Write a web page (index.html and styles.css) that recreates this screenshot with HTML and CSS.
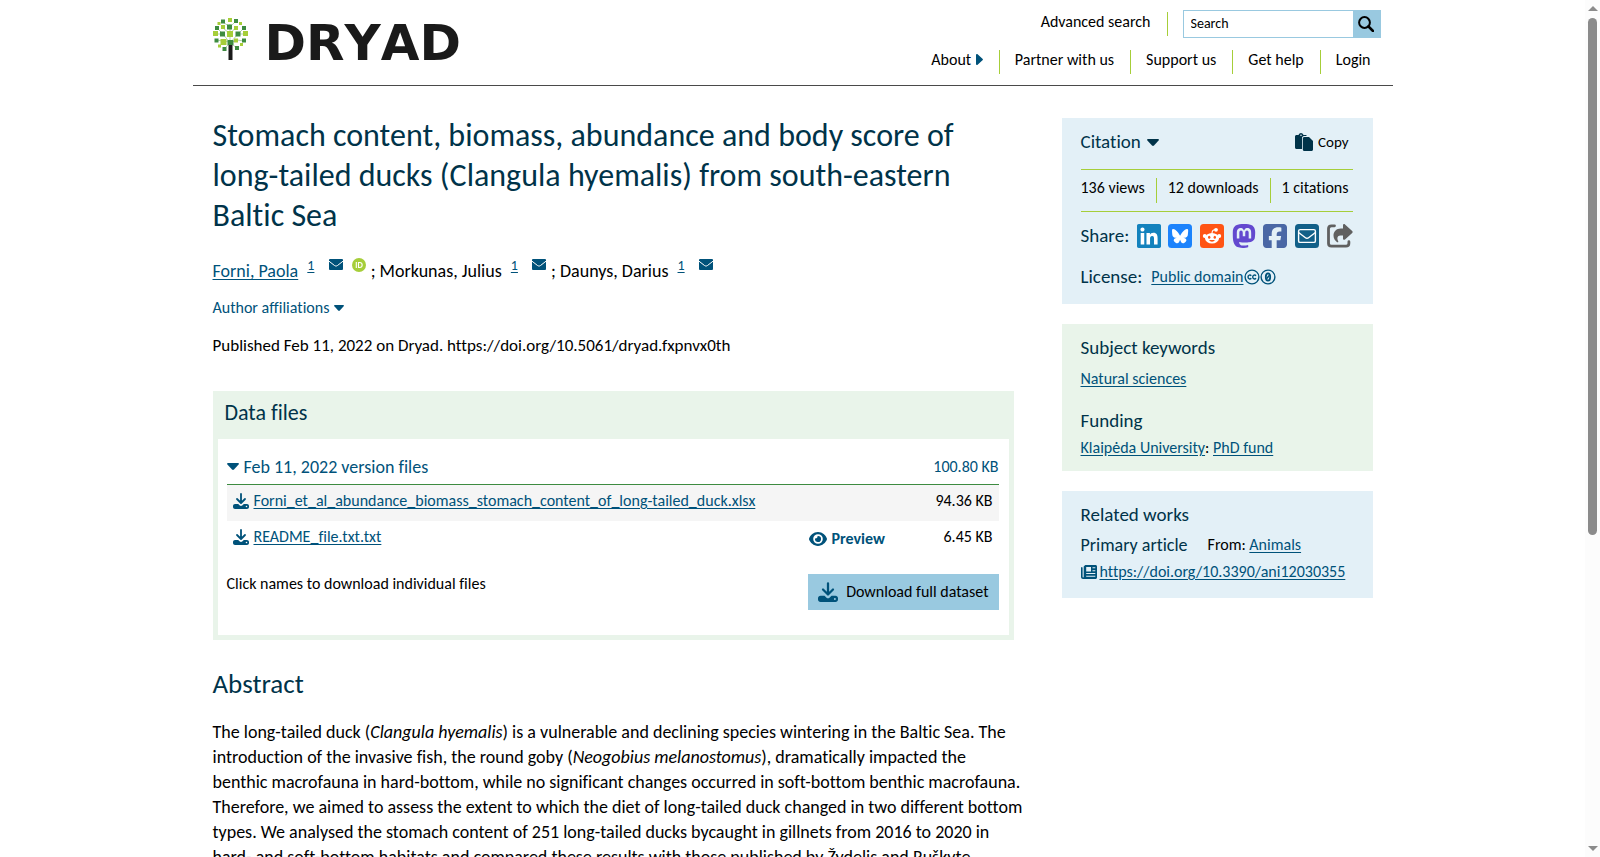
FILE: index.html
```html
<!DOCTYPE html>
<html lang="en">
<head>
<meta charset="utf-8">
<title>Dryad | Stomach content, biomass, abundance and body score of long-tailed ducks</title>
<link rel="stylesheet" href="styles.css">
</head>
<body>
<svg class="sprite" aria-hidden="true">
  <symbol id="down" viewBox="0 0 12 7"><path d="M1 0h10c1 0 1.200.8.600 1.500L7 6.500c-.6.600-1.400.600-2 0L.4 1.500C-.2.800 0 0 1 0z"/></symbol>
  <symbol id="mail" viewBox="0 0 14 11"><rect width="14" height="11" rx="1"/><path d="M0 2.200l5.500 4.300c1 .7 2 .7 3 0L14 2.200" fill="none" stroke="#fff" stroke-width="1"/></symbol>
  <symbol id="save" viewBox="0 0 16 16"><path d="M8 1v8M4 6l4 4 4-4" fill="none" stroke="currentColor" stroke-width="1.800" stroke-linecap="round" stroke-linejoin="round"/><path fill-rule="evenodd" d="M2 11h3.200l1.600 1.500c.7.600 1.700.600 2.400 0L10.800 11H14c1.100 0 2 .9 2 2v1c0 1.100-.9 2-2 2H2c-1.100 0-2-.9-2-2v-1c0-1.100.9-2 2-2zm11.500 1.700a.8.8 0 1 0 0 1.600.8.800 0 0 0 0-1.600z"/></symbol>
</svg>
<div class="window">
<div class="page">
  <header class="header">
    <a class="logo" href="#" aria-label="Dryad home">
      <svg width="35" height="42" viewBox="0 0 35 42">
        <g fill="none" stroke="#8fbf8a" stroke-width=".7"><path d="M17 25L10 16 4 10M17 25l8-9 6-6M17 25V6M10 16H3M25 16h7M17 24l-7-1-7-1M17 25l7-3 7 1M17 25l-6 6M17 25l7 5M10 10l7 6 6-7M10 4l7 5 6-6"/></g>
        <g fill="#a6ce39"><path d="M15 0h4v4h-4zM4.500 4h3v3h-3zM26 4h3v3h-3zM8 7h4v4H8zM21 8h4v4h-4zM0 13h5v5H0zM14 13h6v6h-6zM30 13h5v5h-5zM7.500 21h6v6h-6zM21 20.500h4v4h-4zM5 26.500h3v3H5zM27 25h3v3h-3z"/></g>
        <g fill="#3d8b40"><path d="M8 1.500h4v4H8zM21 1h4v4h-4zM2 8h4v4H2zM14 6.500h5v5h-5zM29 8h4v4h-4zM7 13.500h5v5H7zM22.500 13.500h5v5h-5zM1.500 20.500h4v4h-4zM29 20.500h4v4h-4zM9.500 29h4v4h-4zM22 28h4v4h-4z"/></g>
        <path fill="#1a1a1a" d="M15.500 26h4v16h-4z"/><path fill="#3d8b40" d="M14.500 22h6v5h-6z"/>
      </svg>
      <span class="wordmark">DRYAD</span>
    </a>
    <div class="menus">
      <div class="tools">
        <a class="advanced" href="#">Advanced search</a>
        <form class="search" role="search">
          <input type="text" placeholder="Search" aria-label="Search">
          <button type="button" aria-label="Submit search"><svg width="16" height="16" viewBox="0 0 16 16" fill="none" stroke="#000" stroke-width="2"><circle cx="6.500" cy="6.500" r="5.400"/><path d="M10.500 10.500L15 15" stroke-width="2.500" stroke-linecap="round"/></svg></button>
        </form>
      </div>
      <nav class="nav">
        <a href="#">About <svg class="blue" width="7" height="11" viewBox="0 0 7 11"><path d="M0 1c0-1 1-1.300 1.600-.7l4.900 4.400c.6.500.6 1.100 0 1.600l-4.900 4.400C1 11.300 0 11 0 10z"/></svg></a>
        <a href="#">Partner with us</a>
        <a href="#">Support us</a>
        <a href="#">Get help</a>
        <a href="#">Login</a>
      </nav>
    </div>
  </header>

  <div class="content">
    <main class="main">
      <h1>Stomach content, biomass, abundance and body score of long-tailed ducks (Clangula hyemalis) from south-eastern Baltic Sea</h1>
      <div class="authors">
        <span class="author"><a href="#">Forni, Paola</a> <sup><a href="#">1</a></sup> <a class="badge" href="#" aria-label="Email Paola Forni"><svg width="14" height="11"><use href="#mail"/></svg></a> <a class="badge" href="#" aria-label="ORCID"><svg width="14" height="14" viewBox="0 0 14 14"><circle cx="7" cy="7" r="7" fill="#a6ce39"/><path d="M4.300 4v6M6.500 4.500v5h1.200c3.300 0 3.300-5 0-5z" fill="none" stroke="#fff" stroke-width="1.100"/></svg></a></span>
        <span class="author">; Morkunas, Julius <sup><a href="#">1</a></sup> <a class="badge" href="#" aria-label="Email Julius Morkunas"><svg width="14" height="11"><use href="#mail"/></svg></a></span>
        <span class="author">; Daunys, Darius <sup><a href="#">1</a></sup> <a class="badge" href="#" aria-label="Email Darius Daunys"><svg width="14" height="11"><use href="#mail"/></svg></a></span>
      </div>
      <button class="affiliations" type="button">Author affiliations <svg width="10" height="6"><use href="#down"/></svg></button>
      <p class="published">Published Feb 11, 2022 on Dryad. https://doi.org/10.5061/dryad.fxpnvx0th</p>

      <section class="files">
        <h2>Data files</h2>
        <div class="files-body">
          <details open>
            <summary><svg width="12" height="7"><use href="#down"/></svg><span class="version">Feb 11, 2022 version files</span><span>100.80 KB</span></summary>
            <table>
              <colgroup><col><col class="col-preview"><col class="col-size"></colgroup>
              <tbody>
              <tr><td><a class="file" href="#"><svg width="16" height="16"><use href="#save"/></svg><span>Forni_et_al_abundance_biomass_stomach_content_of_long-tailed_duck.xlsx</span></a></td><td></td><td class="size">94.36 KB</td></tr>
              <tr><td><a class="file" href="#"><svg width="16" height="16"><use href="#save"/></svg><span>README_file.txt.txt</span></a></td><td class="preview-cell"><button class="preview" type="button"><svg width="18" height="14" viewBox="0 0 18 14"><path fill-rule="evenodd" d="M9 0c4.500 0 7.700 3.300 8.900 6.400.1.400.1.800 0 1.200C16.700 10.700 13.500 14 9 14S1.300 10.700.1 7.600a1.600 1.600 0 0 1 0-1.200C1.300 3.300 4.500 0 9 0zm0 2.200a4.800 4.800 0 1 0 0 9.600 4.800 4.800 0 0 0 0-9.600zM9 4a3 3 0 1 1-2.900 2.300A1.900 1.900 0 0 0 8.500 4z"/></svg>Preview</button></td><td class="size">6.45 KB</td></tr>
              </tbody>
            </table>
          </details>
          <div class="files-foot">
            <span>Click names to download individual files</span>
            <button class="download" type="button"><svg width="20" height="20"><use href="#save"/></svg>Download full dataset</button>
          </div>
        </div>
      </section>

      <h2 class="abstract-title">Abstract</h2>
      <p class="abstract">The long-tailed duck (<i>Clangula hyemalis</i>) is a vulnerable and declining species wintering in the Baltic Sea. The introduction of the invasive fish, the round goby (<i>Neogobius melanostomus</i>), dramatically impacted the<br>benthic macrofauna in hard-bottom, while no significant changes occurred in soft-bottom benthic macrofauna. Therefore, we aimed to assess the extent to which the diet of long-tailed duck changed in two different bottom types. We analysed the stomach content of 251 long-tailed ducks bycaught in gillnets from 2016 to 2020 in hard- and soft-bottom habitats and compared these results with those published by Žydelis and Ruškyte</p>
    </main>

    <aside class="side">
      <section class="card blue-card citation">
        <div class="cite-row">
          <button class="cite" type="button">Citation <svg width="12" height="7"><use href="#down"/></svg></button>
          <button class="copy" type="button"><svg width="18" height="18" viewBox="0 0 18 18"><path d="M1.500 2h2C4 .7 5 0 6 0s2 .7 2.500 2h2c.8 0 1.200.5 1.200 1H9C7.800 3 7 4 7 5v11H1.500C.7 16 0 15.300 0 14.500v-11C0 2.700.7 2 1.500 2z"/><path d="M9.300 4H14l4 4v8.500c0 .8-.7 1.500-1.500 1.500H9.300c-.8 0-1.500-.7-1.500-1.500v-11C7.800 4.700 8.500 4 9.300 4z"/><circle cx="6" cy="2.300" r=".8" fill="#e3f0f7"/></svg>Copy</button>
        </div>
        <div class="stats"><span>136 views</span><span>12 downloads</span><span>1 citations</span></div>
        <div class="share">
          <span class="label">Share:</span>
          <a href="#" aria-label="LinkedIn"><svg width="24" height="24" viewBox="0 32 448 448"><path fill="#1382bd" d="M416 32H31.900C14.300 32 0 46.500 0 64.300v383.400C0 465.500 14.300 480 31.900 480H416c17.600 0 32-14.500 32-32.300V64.300c0-17.800-14.400-32.300-32-32.300z"/><path fill="#fff" d="M135.400 416H69V202.200h66.500V416zM102.200 173c-21.300 0-38.500-17.300-38.500-38.500S80.900 96 102.200 96c21.200 0 38.500 17.300 38.500 38.500 0 21.300-17.200 38.500-38.500 38.500zM384.300 416h-66.400V312c0-24.800-.5-56.700-34.500-56.700-34.600 0-39.900 27-39.900 54.900V416h-66.400V202.200h63.700v29.200h.9c8.900-16.800 30.600-34.500 62.900-34.500 67.200 0 79.700 44.300 79.700 101.900V416z"/></svg></a>
          <a href="#" aria-label="Bluesky"><svg width="24" height="24" viewBox="0 0 24 24"><rect width="24" height="24" rx="3.500" fill="#1c83fc"/><path fill="#fff" transform="translate(4 5) scale(.0285)" d="M123.121 33.664C188.241 82.553 258.281 181.680 284 234.873c25.719-53.192 95.759-152.320 160.879-201.210C491.866-1.611 568-28.906 568 57.947c0 17.346-9.945 145.713-15.778 166.555-20.275 72.453-94.155 90.933-159.875 79.748C507.222 323.800 536.444 388.560 473.333 453.320c-119.860 122.992-172.272-30.859-185.702-70.281-2.462-7.227-3.614-10.608-3.631-7.733-.017-2.875-1.169.506-3.631 7.733-13.430 39.422-65.842 193.273-185.702 70.281-63.111-64.760-33.890-129.520 80.986-149.071-65.720 11.185-139.600-7.295-159.875-79.748C9.945 203.659 0 75.291 0 57.946 0-28.906 76.135-1.612 123.121 33.664Z"/></svg></a>
          <a href="#" aria-label="Reddit"><svg width="24" height="24" viewBox="0 0 24 24"><rect width="24" height="24" rx="3.500" fill="#ff5414"/><g fill="#fff"><ellipse cx="12" cy="14.300" rx="7" ry="5.200"/><circle cx="4.800" cy="12" r="2"/><circle cx="19.200" cy="12" r="2"/><circle cx="16" cy="5.800" r="1.900"/></g><path d="M12 9.500c0-2.500 1-3.700 3-3.700" fill="none" stroke="#fff" stroke-width="1.100"/><g fill="#ff5414"><ellipse cx="9.200" cy="13.300" rx="1.200" ry="1.500"/><ellipse cx="14.800" cy="13.300" rx="1.200" ry="1.500"/><path d="M9.200 16h5.600c-.7 2.200-4.900 2.200-5.600 0z"/></g></svg></a>
          <a href="#" aria-label="Mastodon"><svg width="24" height="24" viewBox="0 32 448 448"><path fill="#6349cf" d="M433 179.110c0-97.200-63.710-125.700-63.710-125.700-62.520-28.700-228.560-28.400-290.480 0 0 0-63.720 28.500-63.720 125.700 0 115.700-6.600 259.400 105.630 289.100 40.510 10.700 75.320 13 103.330 11.400 50.810-2.800 79.320-18.100 79.320-18.100l-1.700-36.900s-36.310 11.400-77.120 10.100c-40.410-1.400-83-4.400-89.630-54a102.540 102.540 0 0 1-.9-13.900c85.630 20.900 158.650 9.100 178.750 6.700 56.120-6.700 105-41.300 111.230-72.900 9.800-49.800 9-121.500 9-121.500zm-75.120 125.200h-46.630v-114.200c0-49.700-64-51.600-64 6.900v62.500h-46.330V197c0-58.500-64-56.600-64-6.900v114.200H90.190c0-122.100-5.200-147.900 18.410-175 25.900-28.900 79.820-30.800 103.830 6.100l11.600 19.500 11.600-19.500c24.110-37.100 78.120-34.800 103.830-6.100 23.710 27.300 18.400 53 18.400 175z"/></svg></a>
          <a href="#" aria-label="Facebook"><svg width="24" height="24" viewBox="0 32 448 448"><path fill="#4a67a5" d="M64 32C28.700 32 0 60.700 0 96V416c0 35.300 28.700 64 64 64h98.200V334.200H109.400V256h52.800V222.300c0-87.100 39.400-127.500 125-127.500c16.200 0 44.200 3.200 55.700 6.400V172c-6-.6-16.500-1-29.600-1c-42 0-58.200 15.900-58.200 57.200V256h83.600l-14.400 78.200H255V480H384c35.300 0 64-28.700 64-64V96c0-35.300-28.700-64-64-64H64z"/></svg></a>
          <a href="#" aria-label="Email"><svg width="24" height="24" viewBox="0 0 24 24"><rect width="24" height="24" rx="3.500" fill="#126088"/><rect x="3.600" y="5.600" width="16.800" height="12.800" rx="1.500" fill="none" stroke="#fff" stroke-width="1.400"/><path d="M3.600 8.500l6.500 5c1.300 1 2.500 1 3.800 0l6.500-5" fill="none" stroke="#fff" stroke-width="1.400"/></svg></a>
          <button type="button" aria-label="Copy link"><svg width="26" height="24" viewBox="0 0 26 24"><path d="M7.500 1.800H4.500C2.800 1.800 1.500 3 1.500 4.800v14.400c0 1.800 1.300 3 3 3h14.400c1.700 0 3-1.200 3-3v-1.500" fill="none" stroke="#606060" stroke-width="2.800" stroke-linecap="round"/><path fill="#606060" d="M16 1.200c0-1 1.200-1.500 2-.8l7.200 6.500c.6.600.6 1.400 0 2L18 15.500c-.8.700-2 .2-2-.8v-3.300h-2.500c-3 0-4 2.800-2.300 5.800.4.800-.4 1.500-1.100 1C7.800 16.500 6.500 14.200 6.500 11.500c0-4.200 3.200-7 7.200-7H16z"/></svg></button>
        </div>
        <div class="license"><span class="label">License:</span> <a href="#">Public domain</a>
          <svg width="32" height="16" viewBox="0 0 32 16" fill="none" stroke="#00527a" stroke-width="1.400"><circle cx="8" cy="8" r="6.900"/><circle cx="24" cy="8" r="6.900"/><path d="M7.300 6.700C6.200 5.400 4 6 4 8s2.200 2.600 3.300 1.300M12 6.700C10.900 5.400 8.700 6 8.700 8s2.200 2.600 3.300 1.300"/><ellipse cx="24" cy="8" rx="2.200" ry="3.700" stroke-width="1.800"/><path d="M23 9.500l2-3"/></svg>
        </div>
      </section>

      <section class="card green-card keywords">
        <h3>Subject keywords</h3>
        <p><a href="#">Natural sciences</a></p>
        <h3>Funding</h3>
        <p><a href="#">Klaipėda University</a>: <a href="#">PhD fund</a></p>
      </section>

      <section class="card blue-card related">
        <h3>Related works</h3>
        <div class="article-row"><h4>Primary article</h4><span>From: <a href="#">Animals</a></span></div>
        <a class="doi" href="#"><svg width="16" height="14" viewBox="0 0 16 14"><path fill-rule="evenodd" d="M5 0h9.500C15.300 0 16 .7 16 1.500v11c0 .8-.7 1.500-1.500 1.500H2C.9 14 0 13.100 0 12V3c0-.6.400-1 .8-1s.8.400.8 1v9c0 .3.200.5.500.5s.6-.2.600-.5V1.500C3.300.7 4 0 5 0zm.2 2v4.500H10V2zm6.300.2v1h2.800v-1zm0 3v1h2.800v-1zM5.200 8v1h9.100V8zm0 2.800v1h9.100v-1z"/></svg><span>https://doi.org/10.3390/ani12030355</span></a>
      </section>
    </aside>
  </div>
</div>
<div class="scrollbar" aria-hidden="true"><span class="arrow-up"></span><span class="track"><span class="thumb"></span></span><span class="arrow-down"></span></div>
</div>
</body>
</html>
```
FILE: styles.css
```css
* { box-sizing: border-box; }
body { margin: 0; background: #fff; color: #000; font: 16px/24px Carlito, Lato, sans-serif; font-variant-ligatures: none; }
h1, h2, h3, h4, p { margin: 0; font-weight: 400; }
h1, h2, h3, h4 { color: #003349; }
a { color: #00527a; text-underline-offset: 2px; }
button { border: 0; padding: 0; background: none; font: inherit; color: inherit; cursor: pointer; }
svg { flex: none; }
svg:not([fill]) { fill: currentColor; }
.sprite { display: none; }
.header .blue { color: #00527a; }

.window { display: flex; height: 100vh; overflow: hidden; }
.page { flex: 1; min-width: 0; overflow: hidden; }

.header { display: flex; justify-content: space-between; max-width: 1200px; margin: 0 auto; padding: 10px 6px 0 20px; height: 86px; border-bottom: 1px solid #4a4a4a; }
.header a { color: #000; text-decoration: none; }
.logo { display: flex; align-items: center; gap: 17px; height: 58px; }
.header .wordmark { padding-top: 8px; font: 700 50px/58px "DejaVu Sans", sans-serif; font-kerning: none; color: #1a1a1a; }
.menus { display: flex; flex-direction: column; align-items: flex-end; gap: 12px; }
.tools { display: flex; align-items: center; padding-right: 6px; }
.advanced { padding: 0 16px 4px 0; margin-right: 15px; border-right: 1px solid #a6ce39; line-height: 20px; }
.search { display: flex; height: 28px; border: 1px solid #99c9e0; }
.search input { width: 169px; border: 0; padding: 0 7px; font: 14px/20px Carlito, Lato, sans-serif; color: #000; outline: 0; }
.search input::placeholder { color: #000; opacity: 1; }
.search button { display: flex; align-items: center; justify-content: center; width: 27px; background: #99c9e0; }
.nav { display: flex; }
.nav a { padding: 0 16px 4px 15px; border-right: 1px solid #a6ce39; line-height: 20px; }
.nav a:last-child { border-right: 0; }
.nav svg { margin-left: 1px; }

.content { display: flex; gap: 48px; max-width: 1200px; margin: 0 auto; padding: 30px 20px 0; }
.main { flex: 1; min-width: 0; }
h1 { font-size: 32px; line-height: 40px; }
.authors { margin-top: 20px; font-size: 18px; line-height: 30px; }
.authors sup { margin: 0 10px 0 5px; font-size: 14px; line-height: 0; vertical-align: 7px; }
.badge { margin-right: 1px; line-height: 0; vertical-align: 7px; }
.badge + .badge { margin-left: 4px; vertical-align: 5px; }
.affiliations { display: flex; align-items: center; gap: 5px; margin-top: 10px; color: #00527a; }
.published { margin-top: 14px; font-size: 17px; }

.files { margin-top: 33px; padding: 0 5px 5px; background: #e9f4ea; }
.files h2 { padding: 0 7px 4px; font-size: 22px; line-height: 44px; }
.files-body { padding: 10px 10px 25px 9px; background: #fff; }
.files summary { display: flex; align-items: center; gap: 5px; height: 36px; border-bottom: 1px solid #3d8b40; color: #00527a; list-style: none; cursor: pointer; }
.version { flex: 1; font-size: 18px; }
table { width: 100%; table-layout: fixed; border-collapse: collapse; }
.col-preview { width: 120px; }
.col-size { width: 70px; }
td { height: 36px; padding: 4px 6px 8px; vertical-align: top; }
tr:first-child td { background: #f5f5f5; }
.file { display: flex; align-items: center; gap: 5px; text-decoration: none; white-space: nowrap; }
.file span, .doi span { text-decoration: underline; }
.size { text-align: right; }
td.preview-cell { padding: 6px 0; }
.preview { display: flex; align-items: center; gap: 5px; color: #00527a; font-weight: 700; }
.files-foot { display: flex; justify-content: space-between; align-items: flex-start; margin-top: 17px; line-height: 20px; }
.download { display: flex; align-items: center; gap: 8px; height: 36px; padding: 0 10px; background: #99c9e0; }
.download svg { color: #00527a; }
.abstract-title { margin-top: 24px; font-size: 27px; line-height: 40px; }
.abstract { margin: 16px -16px 0 0; font-size: 18px; line-height: 25px; }

.side { flex: 0 0 311px; display: flex; flex-direction: column; gap: 20px; padding-top: 2px; align-self: flex-start; }
.card { padding: 12px 20px 12px 19px; }
.blue-card { background: #e3f0f7; }
.green-card { background: #e9f4ea; }
.card h3, .label { font-size: 19px; line-height: 24px; color: #003349; }
.card h4 { font-size: 18px; }
.cite-row { display: flex; justify-content: space-between; align-items: center; padding-right: 4px; }
.cite { display: flex; align-items: center; gap: 6px; font-size: 19px; color: #003349; }
.copy { display: flex; align-items: center; gap: 5px; font-size: 15px; }
.copy svg { color: #003349; }
.stats { display: flex; justify-content: space-between; margin-top: 15px; padding: 8px 4px 8px 0; border: solid #a6ce39; border-width: 1px 0; line-height: 20px; }
.stats span { padding: 0 0 5px; }
.stats span + span { padding-left: 11px; border-left: 1px solid #a6ce39; }
.share { display: flex; justify-content: space-between; align-items: center; height: 32px; margin-top: 8px; }
.share a, .share button { display: flex; }
.license { display: flex; align-items: center; margin-top: 13px; }
.license a { margin-left: 9px; }
.license svg { margin-left: 1px; }
.citation { padding-bottom: 15px; }
.keywords { padding-bottom: 11px; }
.keywords p { margin: 7px 0 18px; }
.keywords p:last-child { margin: 3px 0 0; }
.related { padding-bottom: 14px; }
.article-row { display: flex; gap: 20px; align-items: center; margin: 6px 0 3px; }
.doi { display: flex; align-items: center; gap: 3px; text-decoration: none; }

.scrollbar { flex: 0 0 15px; display: flex; flex-direction: column; align-items: center; gap: 7px; padding: 6px 0; background: #fcfcfc; }
.arrow-up { border: 5px solid transparent; border-top: 0; border-bottom: 5px solid #8b8b8b; }
.arrow-down { border: 5px solid transparent; border-bottom: 0; border-top: 5px solid #8b8b8b; }
.track { flex: 1; width: 9px; }
.thumb { display: block; height: 63%; border-radius: 5px; background: #8b8b8b; }
```
